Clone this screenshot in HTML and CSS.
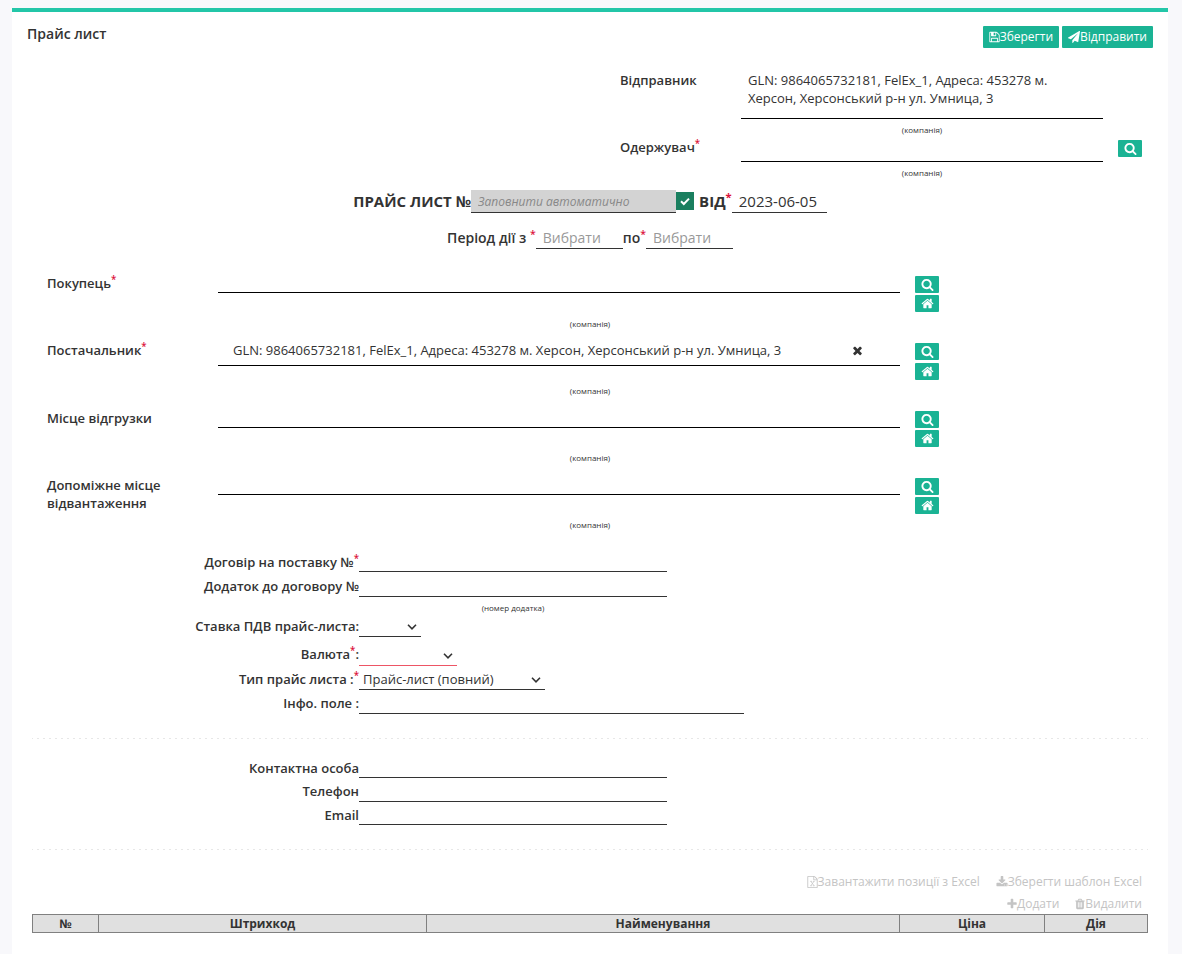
FILE: index.html
```html
<!DOCTYPE html>
<html lang="uk">
<head>
    <meta charset="UTF-8">
    <meta name="viewport" content="width=device-width, initial-scale=1.0">
    <title>Прайс лист</title>
    <link rel="stylesheet" href="styles.css">
</head>
<body>
    <svg class="sprite">
        <symbol id="search" viewBox="0 0 1792 1792"><path d="M1216 832q0-185-131.5-316.5t-316.5-131.5-316.5 131.5-131.5 316.5 131.5 316.5 316.5 131.5 316.5-131.5 131.5-316.5zm512 832q0 52-38 90t-90 38q-54 0-90-38l-343-342q-179 124-399 124-143 0-273.5-55.5t-225-150-150-225-55.5-273.5 55.5-273.5 150-225 225-150 273.5-55.5 273.5 55.5 225 150 150 225 55.5 273.5q0 220-124 399l343 343q37 37 37 90z"/></symbol>
        <symbol id="home" viewBox="0 0 1792 1792"><path d="M1472 992v480q0 26-19 45t-45 19h-384v-384h-256v384h-384q-26 0-45-19t-19-45v-480q0-1 .5-3t.5-3l575-474 575 474q1 2 1 6zm223-69l-62 74q-8 9-21 11h-3q-13 0-21-7l-692-577-692 577q-12 8-24 7-13-2-21-11l-62-74q-8-10-7-23.5t11-21.5l719-599q32-26 76-26t76 26l244 204v-195q0-14 9-23t23-9h192q14 0 23 9t9 23v408l219 182q10 8 11 21.5t-7 23.5z"/></symbol>
        <symbol id="times" viewBox="0 0 1792 1792"><path d="M1490 1322q0 40-28 68l-136 136q-28 28-68 28t-68-28l-294-294-294 294q-28 28-68 28t-68-28l-136-136q-28-28-28-68t28-68l294-294-294-294q-28-28-28-68t28-68l136-136q28-28 68-28t68 28l294 294 294-294q28-28 68-28t68 28l136 136q28 28 28 68t-28 68l-294 294 294 294q28 28 28 68z"/></symbol>
        <symbol id="plus" viewBox="192 0 1408 1792"><path d="M1600 736v192q0 40-28 68t-68 28h-416v416q0 40-28 68t-68 28h-192q-40 0-68-28t-28-68v-416h-416q-40 0-68-28t-28-68v-192q0-40 28-68t68-28h416v-416q0-40 28-68t68-28h192q40 0 68 28t28 68v416h416q40 0 68 28t28 68z"/></symbol>
        <symbol id="download" viewBox="64 0 1664 1792"><path d="M1344 1344q0-26-19-45t-45-19-45 19-19 45 19 45 45 19 45-19 19-45zm256 0q0-26-19-45t-45-19-45 19-19 45 19 45 45 19 45-19 19-45zm128-224v320q0 40-28 68t-68 28h-1472q-40 0-68-28t-28-68v-320q0-40 28-68t68-28h465l135 136q58 56 136 56t136-56l136-136h464q40 0 68 28t28 68zm-325-569q17 41-14 70l-448 448q-18 19-45 19t-45-19l-448-448q-31-29-14-70 17-39 59-39h256v-448q0-26 19-45t45-19h256q26 0 45 19t19 45v448h256q42 0 59 39z"/></symbol>
        <symbol id="trash" viewBox="192 0 1408 1792"><path d="M704 1376v-704q0-14-9-23t-23-9h-64q-14 0-23 9t-9 23v704q0 14 9 23t23 9h64q14 0 23-9t9-23zm256 0v-704q0-14-9-23t-23-9h-64q-14 0-23 9t-9 23v704q0 14 9 23t23 9h64q14 0 23-9t9-23zm256 0v-704q0-14-9-23t-23-9h-64q-14 0-23 9t-9 23v704q0 14 9 23t23 9h64q14 0 23-9t9-23zm-544-992h448l-48-117q-7-9-17-11h-317q-10 2-17 11zm928 32v64q0 14-9 23t-23 9h-96v948q0 83-47 143.5t-113 60.5h-832q-66 0-113-58.5t-47-141.5v-952h-96q-14 0-23-9t-9-23v-64q0-14 9-23t23-9h309l70-167q15-37 54-63t79-26h320q40 0 79 26t54 63l70 167h309q14 0 23 9t9 23z"/></symbol>
        <symbol id="save" viewBox="128 0 1536 1792"><path d="M512 1536h768v-384h-768v384zm896 0h128v-896q0-14-10-38.5t-20-34.5l-281-281q-10-10-34-20t-39-10v416q0 40-28 68t-68 28h-576q-40 0-68-28t-28-68v-416h-128v1280h128v-416q0-40 28-68t68-28h832q40 0 68 28t28 68v416zm-384-928v-320q0-13-9.5-22.5t-22.5-9.5h-192q-13 0-22.5 9.5t-9.5 22.5v320q0 13 9.5 22.5t22.5 9.5h192q13 0 22.5-9.5t9.5-22.5zm640 32v928q0 40-28 68t-68 28h-1344q-40 0-68-28t-28-68v-1344q0-40 28-68t68-28h928q40 0 88 20t76 48l280 280q28 28 48 76t20 88z"/></symbol>
        <symbol id="send" viewBox="0 0 1792 1792"><path d="M1764 11q33 24 27 64l-256 1536q-5 29-32 45-14 8-31 8-11 0-24-5l-453-185-242 295q-18 23-49 23-13 0-22-4-19-7-30.5-23.5t-11.5-36.5v-349l864-1059-1069 925-395-162q-37-14-40-55-2-40 32-59l1664-960q15-9 32-9 20 0 36 11z"/></symbol>
        <symbol id="excel" viewBox="128 0 1536 1792"><path d="M1596 380q28 28 48 76t20 88v1152q0 40-28 68t-68 28h-1344q-40 0-68-28t-28-68v-1600q0-40 28-68t68-28h896q40 0 88 20t76 48zm-444-244v376h376q-10-29-22-41l-313-313q-12-12-41-22zm384 1528v-1024h-416q-40 0-68-28t-28-68v-416h-768v1536h1280z"/><path d="M650 800l480 660M1120 800l-480 660M570 800h260M960 800h240M570 1460h240M940 1460h260" fill="none" stroke="currentColor" stroke-width="110"/></symbol>
    </svg>

    <div class="page">
        <header>
            <h1>Прайс лист</h1>
            <div class="buttons">
                <button class="btn"><svg class="save"><use href="#save"/></svg>Зберегти</button>
                <button class="btn"><svg><use href="#send"/></svg>Відправити</button>
            </div>
        </header>

        <section class="parties">
            <b>Відправник</b>
            <div class="value sender">GLN: 9864065732181, FelEx_1, Адреса: 453278 м. Херсон, Херсонський р-н ул. Умница, 3</div>
            <small>(компанія)</small>
            <b>Одержувач<sup>*</sup></b>
            <div class="value"></div>
            <button class="mini"><svg><use href="#search"/></svg></button>
            <small>(компанія)</small>
        </section>

        <section class="number">
            <b>ПРАЙС ЛИСТ №</b>
            <input type="text" class="auto" placeholder="Заповнити автоматично" disabled>
            <span class="check"><svg viewBox="0 0 18 18"><path d="M5 9.2l2.8 2.8 5.2-5.4"/></svg></span>
            <b class="from">ВІД<sup>*</sup></b>
            <input type="text" class="date" value="2023-06-05">
        </section>
        <section class="period">
            <b>Період дії з <sup>*</sup></b>
            <input type="text" placeholder="Вибрати">
            <b>по<sup>*</sup></b>
            <input type="text" placeholder="Вибрати">
        </section>

        <section class="companies">
            <div class="company">
                <b>Покупець<sup>*</sup></b>
                <div class="field"><div class="value"></div><small>(компанія)</small></div>
                <div class="minis">
                    <button class="mini"><svg><use href="#search"/></svg></button>
                    <button class="mini"><svg><use href="#home"/></svg></button>
                </div>
            </div>
            <div class="company next">
                <b>Постачальник<sup>*</sup></b>
                <div class="field">
                    <div class="value filled"><span>GLN: 9864065732181, FelEx_1, Адреса: 453278 м. Херсон, Херсонський р-н ул. Умница, 3</span><svg><use href="#times"/></svg></div>
                    <small>(компанія)</small>
                </div>
                <div class="minis wide">
                    <button class="mini"><svg><use href="#search"/></svg></button>
                    <button class="mini"><svg><use href="#home"/></svg></button>
                </div>
            </div>
            <div class="company short">
                <b>Місце відгрузки</b>
                <div class="field"><div class="value"></div><small>(компанія)</small></div>
                <div class="minis">
                    <button class="mini"><svg><use href="#search"/></svg></button>
                    <button class="mini"><svg><use href="#home"/></svg></button>
                </div>
            </div>
            <div class="company short">
                <b>Допоміжне місце відвантаження</b>
                <div class="field"><div class="value"></div><small>(компанія)</small></div>
                <div class="minis">
                    <button class="mini"><svg><use href="#search"/></svg></button>
                    <button class="mini"><svg><use href="#home"/></svg></button>
                </div>
            </div>
        </section>

        <section class="details">
            <label for="contract" class="low">Договір на поставку №<sup>*</sup></label>
            <input type="text" id="contract">
            <label for="addition">Додаток до договору №</label>
            <input type="text" id="addition">
            <small>(номер додатка)</small>
            <label for="vat">Ставка ПДВ прайс-листа:</label>
            <select id="vat" class="vat"><option></option></select>
            <label for="currency" class="high">Валюта<sup>*</sup>:</label>
            <select id="currency" class="currency"><option></option></select>
            <label for="type">Тип прайс листа :<sup>*</sup></label>
            <select id="type" class="type"><option>Прайс-лист (повний)</option></select>
            <label for="info">Інфо. поле :</label>
            <input type="text" id="info" class="info">
        </section>
        <hr>
        <section class="contacts">
            <label for="person" class="low">Контактна особа</label>
            <input type="text" id="person">
            <label for="phone">Телефон</label>
            <input type="text" id="phone">
            <label for="email" class="low">Email</label>
            <input type="text" id="email">
        </section>
        <hr>

        <section class="actions">
            <div><a><svg class="doc"><use href="#excel"/></svg>Завантажити позиції з Excel</a><a><svg class="down"><use href="#download"/></svg>Зберегти шаблон Excel</a></div>
            <div><a><svg><use href="#plus"/></svg>Додати</a><a><svg><use href="#trash"/></svg>Видалити</a></div>
        </section>
        <table>
            <colgroup><col class="c1"><col class="c2"><col class="c3"><col class="c4"><col class="c5"></colgroup>
            <tr>
                <th>№</th>
                <th>Штрихкод</th>
                <th>Найменування</th>
                <th>Ціна</th>
                <th>Дія</th>
            </tr>
        </table>
    </div>
</body>
</html>
```
FILE: styles.css
```css
*{
    box-sizing: border-box;
}
body{
    margin: 0;
    padding: 8px 14px 0 12px;
    font: 13px/18px "Open Sans", "Noto Sans", sans-serif;
    color: #333;
    background-color: #f8f8fb;
    overflow: hidden;
}
.sprite{
    display: none;
}
svg{
    width: 12px;
    height: 12px;
    fill: currentColor;
}
b, label{
    font-weight: 600;
}
sup{
    position: relative;
    top: -0.5em;
    font-size: 75%;
    line-height: 0;
    vertical-align: baseline;
    color: crimson;
}
small{
    font-size: 8px;
    line-height: 12px;
    text-align: center;
}
input, select{
    font: inherit;
    color: inherit;
    margin: 0;
    padding: 0;
    border: 0;
    border-bottom: 1px solid #333;
    border-radius: 0;
    background-color: white;
    outline: none;
}
.page{
    height: 946px;
    border-top: 4px solid #23c6a8;
    background-color: white;
}
header{
    display: flex;
    justify-content: space-between;
    height: 59px;
    padding: 14px 15px 0;
}
h1{
    margin: 0;
    font-size: 14px;
    line-height: 16px;
    font-weight: 600;
}
.buttons{
    display: flex;
    gap: 3px;
}
.btn{
    display: flex;
    align-items: center;
    height: 22px;
    padding: 0 6px;
    border: 0;
    border-radius: 1px;
    font: 12px/18px "Open Sans", sans-serif;
    color: white;
    background-color: #1ab394;
}
.btn .save{
    width: 11px;
}
.mini{
    display: flex;
    align-items: center;
    justify-content: center;
    width: 24px;
    height: 17px;
    padding: 0;
    border: 0;
    border-radius: 1px;
    color: white;
    background-color: #1ab394;
}
.mini svg{
    width: 13px;
    height: 13px;
}

/* sender and receiver */
.parties{
    display: grid;
    grid-template-columns: 121px 362px 39px;
    grid-template-rows: 48px 19px 24px 24px;
    padding-left: 608px;
}
.parties b{
    grid-column: 1;
}
.parties small{
    grid-column: 2;
    padding-top: 5px;
}
.parties .mini{
    margin: 2px 0 0 15px;
}
.value{
    border-bottom: 1px solid black;
}
.sender{
    padding: 0 40px 0 7px;
}

/* document number and period */
.number, .period{
    display: flex;
    justify-content: center;
}
.number{
    height: 27px;
    padding-top: 4px;
    font-size: 15px;
    line-height: 22px;
}
.number b{
    font-weight: 700;
}
.number .auto{
    width: 205px;
    height: 23px;
    padding-left: 7px;
    font-size: 12px;
    font-style: italic;
    background-color: #d3d3d3;
}
.auto::placeholder{
    color: #888;
}
.check{
    width: 18px;
    height: 18px;
    margin-top: 2px;
    background-color: #1a7f5f;
}
.check svg{
    display: block;
    width: 18px;
    height: 18px;
    fill: none;
    stroke: white;
    stroke-width: 2;
}
.number .from{
    margin-left: 5px;
}
.number .date{
    width: 95px;
    height: 23px;
    padding-left: 7px;
}
.period{
    height: 61px;
    padding-top: 13px;
    font-size: 14px;
    line-height: 24px;
}
.period input{
    width: 87px;
    height: 23px;
    padding: 2px 0 0 7px;
}
.period input::placeholder{
    color: #999;
}

/* companies */
.company{
    display: grid;
    grid-template-columns: 171px 682px 39px;
    height: 67px;
    padding-left: 35px;
}
.company.next{
    height: 68px;
}
.company b{
    padding-right: 40px;
}
.field{
    display: flex;
    flex-direction: column;
    justify-content: space-between;
    height: 56px;
}
.short .field{
    height: 55px;
}
.field small{
    padding-left: 62px;
}
.company .value{
    height: 19px;
}
.company .filled{
    display: flex;
    justify-content: space-between;
    align-items: flex-start;
    height: 25px;
    padding: 0 36px 0 15px;
}
.filled svg{
    width: 13px;
    height: 13px;
    margin-top: 3px;
}
.minis{
    display: flex;
    flex-direction: column;
    gap: 2px;
    margin-left: 15px;
    padding-top: 2px;
}
.minis.wide{
    gap: 3px;
}

/* agreement fields */
.details, .contacts{
    display: grid;
    grid-template-columns: 347px 385px;
    align-items: end;
}
.details{
    grid-template-rows: 29px 25px 22px 18px 29px 24px 24px;
}
.contacts{
    grid-template-rows: 39px 24px 23px;
    height: 110px;
}
label{
    text-align: right;
    padding-bottom: 2px;
}
.low{
    padding-bottom: 1px;
}
.high{
    padding-bottom: 3px;
}
.details input, .contacts input{
    width: 308px;
    height: 18px;
}
.details .info{
    width: 385px;
}
.details small{
    grid-column: 2;
    width: 308px;
    align-self: center;
}
.details select{
    height: 20px;
    padding: 0 20px 1px 4px;
    appearance: none;
    background: white url("data:image/svg+xml,%3Csvg xmlns='http://www.w3.org/2000/svg' width='10' height='6'%3E%3Cpath d='M1 .8l4 4 4-4' fill='none' stroke='%23333' stroke-width='1.6'/%3E%3C/svg%3E") no-repeat right 4px top 7px;
}
.vat{
    width: 62px;
}
.currency{
    width: 98px;
}
.details .currency{
    border-color: #ed5565;
}
.type{
    width: 186px;
}
hr{
    height: 1px;
    margin: 24px 20px 0;
    border: 0;
    background: repeating-linear-gradient(to right, #e7e7e7 0 1px, transparent 1px 5px, #e7e7e7 5px 6px);
}
.companies{
    height: 269px;
}
.contacts + hr{
    margin-top: 0;
}

/* positions table */
.actions{
    height: 64px;
    padding: 21px 26px 0 0;
    font-size: 12px;
    line-height: 22px;
    color: #c4c4c4;
}
.actions div{
    display: flex;
    justify-content: flex-end;
    gap: 16px;
}
.actions a{
    display: flex;
    align-items: center;
}
.actions svg{
    width: 10px;
}
.actions .doc{
    width: 11px;
}
.actions .down{
    width: 12px;
}
table{
    width: 1116px;
    margin-left: 20px;
    table-layout: fixed;
    border-collapse: collapse;
    font-size: 12px;
    line-height: 17px;
}
th{
    padding: 0;
    height: 18px;
    border: 1px solid #808080;
    background-color: #e0e0e0;
}
.c1{
    width: 66px;
}
.c2{
    width: 328px;
}
.c3{
    width: 473px;
}
.c4{
    width: 145px;
}
.c5{
    width: 103px;
}
```
